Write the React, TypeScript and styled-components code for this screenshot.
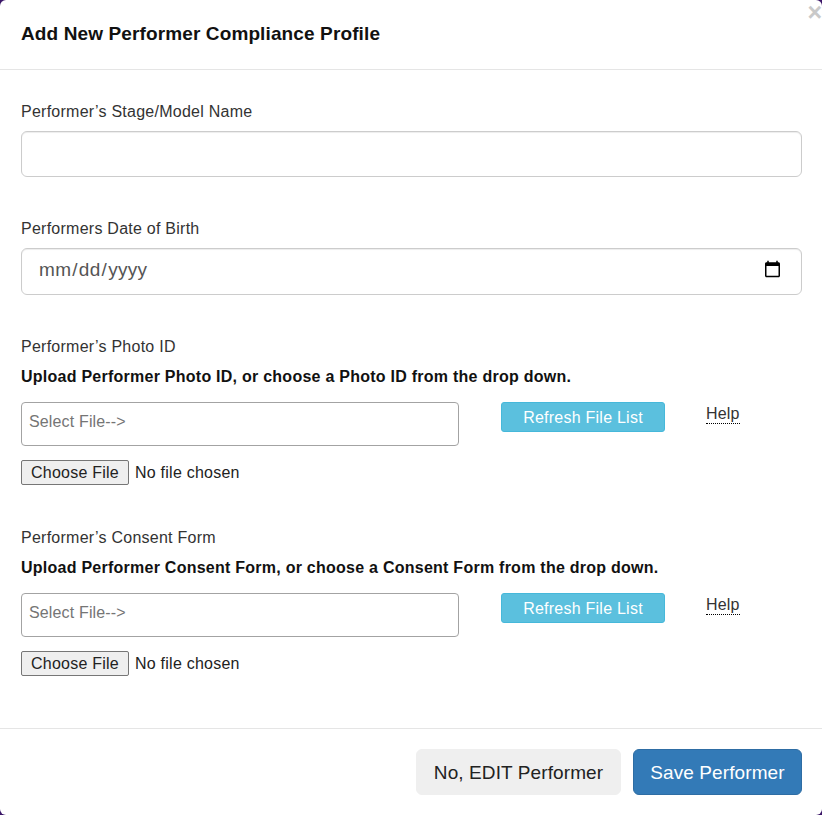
import React from "react";
import styled, { createGlobalStyle } from "styled-components";

const Global = createGlobalStyle`
  html, body { margin: 0; padding: 0; height: 815px; overflow: hidden; background: #3b1668; }
  * { box-sizing: border-box; }
  #root { height: 815px; }
`;

const Modal = styled.div`
  position: relative;
  width: 822px;
  height: 815px;
  background: #fff;
  border-radius: 6px;
  font-family: "Liberation Sans", Arial, sans-serif;
  color: #333;
  display: flex;
  flex-direction: column;
`;

const Header = styled.header`
  flex: none;
  height: 70px;
  padding: 0 21px;
  border-bottom: 1px solid #e5e5e5;
  display: flex;
  align-items: center;
`;

const Title = styled.h4`
  margin: 0;
  font-size: 19px;
  letter-spacing: 0.12px;
  line-height: 1.1;
  font-weight: 700;
  color: #111;
`;

const Close = styled.button`
  position: absolute;
  top: 0;
  right: 0;
  width: 15px;
  height: 24px;
  padding: 0;
  border: 0;
  background: none;
  color: #c9c9c9;
  text-align: right;
  font: 700 25px/24px "Liberation Sans", Arial, sans-serif;
`;

const Body = styled.main`
  flex: 1;
  min-height: 0;
  padding: 30px 20px 0 21px;
  display: flex;
  flex-direction: column;
`;

const Field = styled.section`
  flex: none;
  margin-bottom: 40px;
`;

const Label = styled.label`
  display: block;
  font-size: 16px;
  letter-spacing: 0.25px;
  line-height: 23px;
  color: #333;
  margin-bottom: 8px;
`;

const FileLabel = styled(Label)`
  margin-bottom: 7px;
`;

const Input = styled.input<{ $h: number }>`
  display: block;
  width: 100%;
  height: ${(p) => p.$h}px;
  padding: 8px 17px 12px 16px;
  font: 19px/1.33 "Liberation Sans", Arial, sans-serif;
  letter-spacing: 0.3px;
  color: #555;
  background: #fff;
  border: 1px solid #ccc;
  border-radius: 6px;
  box-shadow: inset 0 1px 1px rgba(0, 0, 0, 0.075);
  outline: none;
`;

const Hint = styled.p`
  margin: 0 0 14px;
  font-size: 16px;
  letter-spacing: 0.25px;
  line-height: 23px;
  font-weight: 700;
  color: #111;
`;

const PickRow = styled.div`
  display: flex;
  align-items: flex-start;
`;

const PickBox = styled.div`
  flex: none;
  width: 438px;
  height: 44px;
  padding: 8px 7px;
  font-size: 16px;
  letter-spacing: 0.15px;
  line-height: 21px;
  color: #757575;
  border: 1px solid #a3a3a3;
  border-radius: 4px;
  background: #fff;
`;

const Refresh = styled.button`
  flex: none;
  margin-left: 42px;
  width: 164px;
  height: 30px;
  padding: 2px 0 0;
  border: 1px solid #46b8da;
  border-radius: 3px;
  background: #5bc0de;
  color: #fff;
  font: 16px/1.5 "Liberation Sans", Arial, sans-serif;
  letter-spacing: 0.24px;
`;

const Help = styled.span`
  margin: 1px 0 0 41px;
  font-size: 16px;
  letter-spacing: 0.2px;
  line-height: 22px;
  color: #333;
  border-bottom: 1px dotted #000;
  height: 21px;
`;

const FileInput = styled.input`
  display: block;
  margin-top: 14px;
  height: 26px;
  font: 16px "Liberation Sans", Arial, sans-serif;
  letter-spacing: 0.24px;
  color: #222;

  &::file-selector-button {
    width: 108px;
    height: 25px;
    padding: 0;
    margin-right: 6px;
    border: 1px solid #767676;
    border-radius: 2px;
    background: #efefef;
    color: #222;
    font: inherit;
    letter-spacing: 0.24px;
  }
`;

const Footer = styled.footer`
  flex: none;
  height: 87px;
  border-top: 1px solid #e5e5e5;
  padding: 20px 20px 0 0;
  display: flex;
  justify-content: flex-end;
  gap: 12px;
`;

const FootButton = styled.button<{ $primary?: boolean; $w: number }>`
  width: ${(p) => p.$w}px;
  height: 46px;
  padding: 2px 0 0;
  border-radius: 6px;
  border: 1px solid ${(p) => (p.$primary ? "#2e6da4" : "#efefef")};
  background: ${(p) => (p.$primary ? "#337ab7" : "#efefef")};
  color: ${(p) => (p.$primary ? "#fff" : "#222")};
  font: 19px/1.33 "Liberation Sans", Arial, sans-serif;
  letter-spacing: 0.1px;
`;

const FilePicker = ({ title, hint }: { title: string; hint: string }) => (
  <Field>
    <FileLabel>{title}</FileLabel>
    <Hint>{hint}</Hint>
    <PickRow>
      <PickBox>Select File--&gt;</PickBox>
      <Refresh type="button">Refresh File List</Refresh>
      <Help>Help</Help>
    </PickRow>
    <FileInput type="file" />
  </Field>
);

export default function App() {
  return (
    <>
      <Global />
      <Modal>
        <Close type="button">×</Close>
        <Header>
          <Title>Add New Performer Compliance Profile</Title>
        </Header>
        <Body>
          <Field>
            <Label>Performer’s Stage/Model Name</Label>
            <Input $h={46} type="text" />
          </Field>
          <Field>
            <Label>Performers Date of Birth</Label>
            <Input $h={47} type="date" />
          </Field>
          <FilePicker
            title="Performer’s Photo ID"
            hint="Upload Performer Photo ID, or choose a Photo ID from the drop down."
          />
          <FilePicker
            title="Performer’s Consent Form"
            hint="Upload Performer Consent Form, or choose a Consent Form from the drop down."
          />
        </Body>
        <Footer>
          <FootButton type="button" $w={205}>No, EDIT Performer</FootButton>
          <FootButton type="button" $w={169} $primary>Save Performer</FootButton>
        </Footer>
      </Modal>
    </>
  );
}
